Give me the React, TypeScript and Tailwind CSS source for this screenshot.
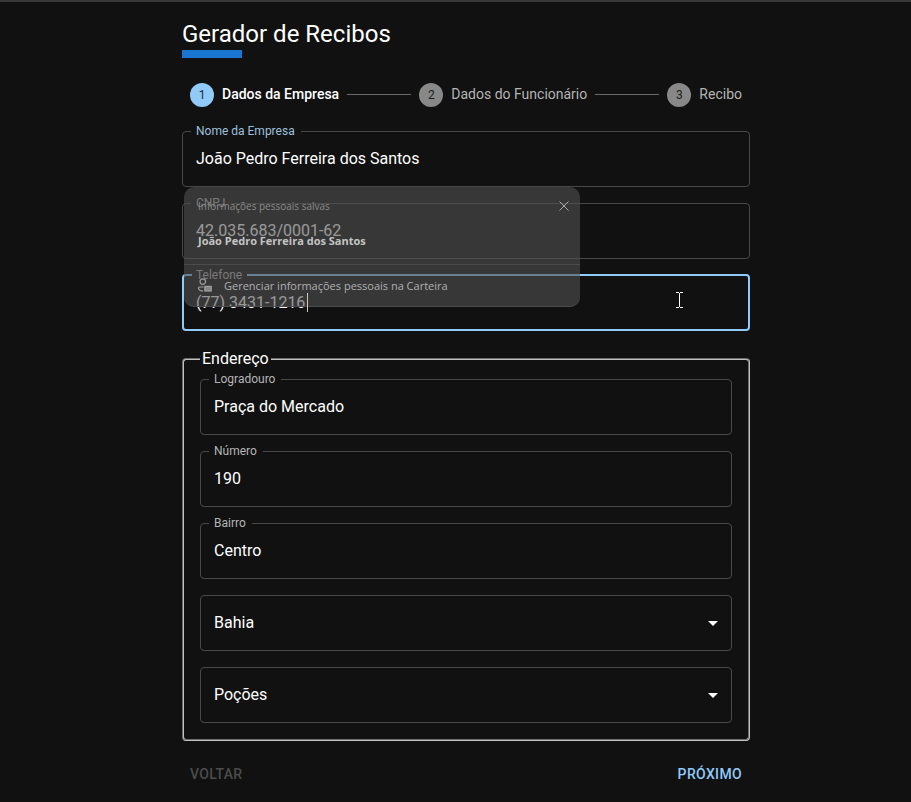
import { useState } from 'react';

type FieldProps = {
  id: string;
  label: string;
  initial: string;
  tone?: 'muted' | 'blue';
  focused?: boolean;
};

function Field({ id, label, initial, tone = 'muted', focused = false }: FieldProps) {
  const [value, setValue] = useState(initial);
  return (
    <fieldset
      className={
        focused
          ? 'h-[61px] min-w-0 rounded border-2 border-[#90caf9] px-2'
          : 'h-[61px] min-w-0 rounded border border-[#484848] px-2'
      }
    >
      <legend className={focused ? 'h-[10px] px-1' : 'h-[11px] px-[5px]'}>
        <label
          htmlFor={id}
          className={
            tone === 'blue'
              ? 'block pr-px text-xs leading-[11px] text-[#9cc0de]'
              : 'block pr-px text-xs leading-[11px] text-[#b4b4b4]'
          }
        >
          {label}
        </label>
      </legend>
      <input
        id={id}
        value={value}
        onChange={(e) => setValue(e.target.value)}
        className={
          focused
            ? 'block h-11 w-full bg-transparent px-1 text-base leading-6 text-white outline-none'
            : 'block h-[43px] w-full bg-transparent px-[5px] text-base leading-6 text-white outline-none'
        }
      />
    </fieldset>
  );
}

function SelectField({ label, options }: { label: string; options: string[] }) {
  return (
    <div className="relative">
      <select
        aria-label={label}
        className="block h-14 w-full appearance-none rounded border border-[#484848] bg-[#111111] px-[13px] text-base text-white outline-none"
      >
        {options.map((o) => (
          <option key={o}>{o}</option>
        ))}
      </select>
      <svg viewBox="0 0 24 24" className="pointer-events-none absolute top-4 right-[7px] size-6 fill-white">
        <path d="M7 10l5 5 5-5z" />
      </svg>
    </div>
  );
}

function Step({ number, label, active = false }: { number: number; label: string; active?: boolean }) {
  return (
    <li className="flex items-center gap-2">
      <span
        className={
          active
            ? 'flex size-6 items-center justify-center rounded-full bg-[#90caf9] text-xs text-[#222b33]'
            : 'flex size-6 items-center justify-center rounded-full bg-[#888888] text-xs text-[#1c1c1c]'
        }
      >
        {number}
      </span>
      <span className={active ? 'pb-0.5 text-sm font-medium text-white' : 'pb-0.5 text-sm text-[#b4b4b4]'}>
        {label}
      </span>
    </li>
  );
}

function SavedInfoPopup() {
  return (
    <div className="absolute top-full left-0.5 z-10 h-[120px] w-[396px] rounded-[10px] border-b border-[#4c4c4c] bg-[rgba(82,82,82,0.6)] font-['Open_Sans','Noto_Sans',sans-serif]">
      <div className="flex h-[78px] flex-col border-b border-[#4c4c4c] px-3.5 pt-2.5">
        <div className="flex items-center justify-between">
          <span className="text-[10px] leading-[18px] text-[#8a8a8a]">Informações pessoais salvas</span>
          <button type="button" aria-label="Fechar" className="-mr-1 text-[#a8a8a8]">
            <svg viewBox="0 0 12 12" className="size-3" fill="none" stroke="currentColor">
              <path d="M1.5 1.5l9 9M10.5 1.5l-9 9" />
            </svg>
          </button>
        </div>
        <button type="button" className="mt-4 text-left text-[11px] leading-5 font-bold text-[#c4c4c4]">
          João Pedro Ferreira dos Santos
        </button>
      </div>
      <button type="button" className="flex h-[42px] items-center gap-2.5 px-3.5 text-[11px] text-[#b0b0b0]">
        <svg viewBox="0 0 16 16" className="size-4" fill="none" stroke="#a0a0a0" strokeWidth="1.2">
          <circle cx="4.8" cy="3.6" r="2.8" />
          <path d="M5.5 9H1.8C.6 9 .4 9.8.6 10.6c.5 1.6 2.2 2.4 4.6 2.4" />
          <rect x="6.8" y="8.4" width="6.4" height="4.6" fill="#888888" />
        </svg>
        Gerenciar informações pessoais na Carteira
      </button>
    </div>
  );
}

export default function App() {
  return (
    <div className="min-h-screen border-t-2 border-[#383838] bg-[#111111] pl-[21px] font-[Roboto,'Liberation_Sans',sans-serif] text-white">
      <main className="mx-auto max-w-[600px] px-4 pt-4">
        <h1 className="text-2xl leading-8">Gerador de Recibos</h1>
        <div className="h-2 w-[60px] bg-[#1976d2]" />

        <ol className="mt-[25px] flex items-center gap-2 px-2">
          <Step number={1} label="Dados da Empresa" active />
          <li aria-hidden="true" className="mb-px h-px flex-1 bg-[#6b6b6b]" />
          <Step number={2} label="Dados do Funcionário" />
          <li aria-hidden="true" className="mb-px h-px flex-1 bg-[#6b6b6b]" />
          <Step number={3} label="Recibo" />
        </ol>

        <form className="mt-[19px]" onSubmit={(e) => e.preventDefault()}>
          <div className="flex flex-col gap-[11px]">
            <div className="relative">
              <Field id="nome" label="Nome da Empresa" initial="João Pedro Ferreira dos Santos" tone="blue" />
              <SavedInfoPopup />
            </div>
            <Field id="cnpj" label="CNPJ" initial="42.035.683/0001-62" />
            <div className="relative">
              <Field id="telefone" label="Telefone" initial="(77) 3431-1216" focused />
              <span className="absolute top-[23px] left-[125px] z-20 h-[19px] w-px bg-[#c8c8c8]" />
              <svg
                viewBox="0 0 7 16"
                className="pointer-events-none absolute top-[22px] right-[67px] h-4 w-[7px]"
                fill="none"
                stroke="#ffffff"
                shapeRendering="crispEdges"
              >
                <path d="M0 .5h3M4 .5h3M3.5 1v14M0 15.5h3M4 15.5h3" />
              </svg>
            </div>
          </div>

          <fieldset className="mt-4 min-w-0 rounded border-2 border-[#c0c0c0] px-4 pb-4 [border-style:groove]">
            <legend className="px-0.5 text-base leading-6">Endereço</legend>
            <div className="flex flex-col gap-4 pt-[3px]">
              <div className="flex flex-col gap-[11px]">
                <Field id="logradouro" label="Logradouro" initial="Praça do Mercado" />
                <Field id="numero" label="Número" initial="190" />
                <Field id="bairro" label="Bairro" initial="Centro" />
              </div>
              <SelectField label="Estado" options={['Bahia']} />
              <SelectField label="Cidade" options={['Poções']} />
            </div>
          </fieldset>

          <div className="mt-[15px] flex justify-between text-sm font-medium tracking-wide">
            <button type="button" disabled className="h-9 px-2 text-[#4c4c4c]">
              VOLTAR
            </button>
            <button type="submit" className="h-9 px-2 text-[#90caf9]">
              PRÓXIMO
            </button>
          </div>
        </form>
      </main>
    </div>
  );
}
